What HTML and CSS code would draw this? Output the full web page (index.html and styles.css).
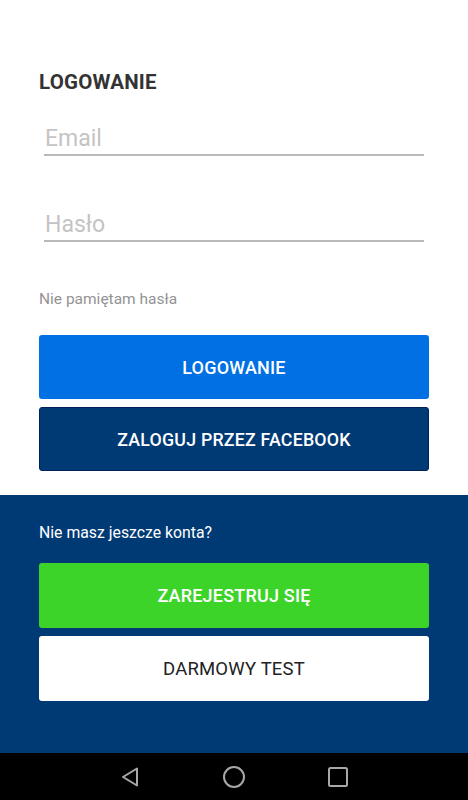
FILE: index.html
```html
<!DOCTYPE html>
<html lang="pl">
<head>
<meta charset="utf-8">
<title>Logowanie</title>
<link rel="stylesheet" href="styles.css">
</head>
<body>
<div class="screen">
  <section class="login">
    <h1 class="title">LOGOWANIE</h1>
    <div class="field"><span class="placeholder">Email</span></div>
    <div class="field field-second"><span class="placeholder">Hasło</span></div>
    <div class="forgot">Nie pamiętam hasła</div>
    <div class="btn btn-login">LOGOWANIE</div>
    <div class="btn btn-fb">ZALOGUJ PRZEZ FACEBOOK</div>
  </section>
  <section class="register">
    <div class="question">Nie masz jeszcze konta?</div>
    <div class="btn btn-register">ZAREJESTRUJ SIĘ</div>
    <div class="btn btn-test">DARMOWY TEST</div>
  </section>
  <nav class="navbar">
    <svg class="nav-icon" width="24" height="24" viewBox="0 0 24 24"><path d="M19 3.5 L19 20.5 L5 12 Z" fill="none" stroke="#a8a8a8" stroke-width="2" stroke-linejoin="round"/></svg>
    <svg class="nav-icon" width="24" height="24" viewBox="0 0 24 24"><circle cx="12" cy="12" r="10" fill="none" stroke="#a8a8a8" stroke-width="2"/></svg>
    <svg class="nav-icon" width="24" height="24" viewBox="0 0 24 24"><rect x="3" y="3" width="18" height="18" rx="1.5" fill="none" stroke="#a8a8a8" stroke-width="2"/></svg>
  </nav>
</div>
</body>
</html>
```
FILE: styles.css
```css
* { box-sizing: border-box; }
html, body { margin: 0; padding: 0; }
body {
  font-family: Roboto, "Liberation Sans", Arial, sans-serif;
  background: #ffffff;
}
.screen {
  width: 468px;
  height: 800px;
  display: flex;
  flex-direction: column;
  overflow: hidden;
}
.login {
  height: 495px;
  padding: 70px 39px 0 39px;
  display: flex;
  flex-direction: column;
}
.title {
  margin: 0;
  font-size: 20.5px;
  line-height: 24px;
  font-weight: 700;
  color: #333333;
  letter-spacing: 0.2px;
}
.field {
  margin: 30px 5px 0 5px;
  height: 32px;
  border-bottom: 2px solid #b9b9b9;
  display: flex;
  align-items: center;
}
.field-second { margin-top: 54px; }
.placeholder {
  font-size: 23px;
  color: #c4c4c4;
  padding-left: 1px;
  line-height: 26px;
  margin-top: -1px;
}
.forgot {
  margin-top: 48px;
  font-size: 15.5px;
  line-height: 18px;
  color: #939393;
}
.btn {
  height: 64px;
  border-radius: 3px;
  display: flex;
  align-items: center;
  justify-content: center;
  font-size: 17.8px;
  font-weight: 500;
  letter-spacing: 0.2px;
  color: #ffffff;
}
.btn-login {
  margin-top: 27px;
  background: #0070e2;
  font-size: 18px;
}
.btn-fb {
  margin-top: 8px;
  height: 64px;
  background: #003a75;
  border: 1px solid #00205a;
}
.register {
  height: 258px;
  background: #003a75;
  padding: 29px 39px 0 39px;
  display: flex;
  flex-direction: column;
}
.question {
  font-size: 15.8px;
  line-height: 18px;
  color: #ffffff;
}
.btn-register {
  margin-top: 21px;
  height: 65px;
  background: #3dd42a;
  font-size: 18px;
}
.btn-test {
  margin-top: 8px;
  height: 65px;
  background: #ffffff;
  color: #222222;
  font-size: 18.5px;
  font-weight: 400;
}
.navbar {
  height: 47px;
  background: #000000;
  display: flex;
  align-items: center;
  justify-content: center;
  gap: 80px;
}
.nav-icon { display: block; }
```
